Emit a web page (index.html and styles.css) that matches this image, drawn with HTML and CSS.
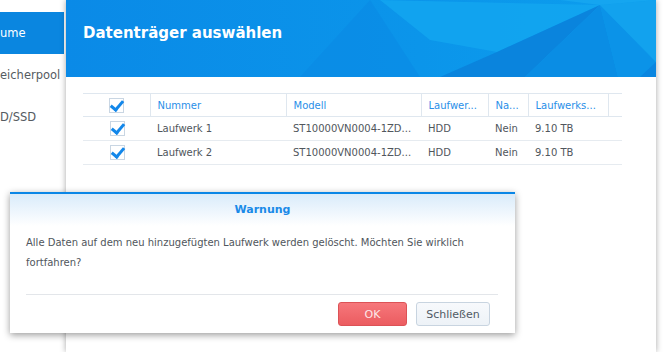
FILE: index.html
```html
<!DOCTYPE html>
<html>
<head>
  <title>Datenträger auswählen</title>
  <link rel="stylesheet" href="styles.css">
</head>
<body>
  <div class="app">
    <div class="sidebar">
      <div class="nav-item active">ume</div>
      <div class="nav-item">eicherpool</div>
      <div class="nav-item">D/SSD</div>
    </div>

    <div class="panel">
      <div class="header">
        <svg class="header-art" width="590" height="77" viewBox="66 0 590 77" preserveAspectRatio="none">
          <defs>
            <linearGradient id="hg" x1="0" y1="0" x2="1" y2="0">
              <stop offset="0" stop-color="#0a8ae7"/>
              <stop offset="0.6" stop-color="#0b95ea"/>
              <stop offset="1" stop-color="#0c9eee"/>
            </linearGradient>
          </defs>
          <rect x="66" y="0" width="590" height="77" fill="url(#hg)"/>
          <polygon points="370,0 420,77 300,77" fill="#0a88e4" opacity="0.5"/>
          <polygon points="380,0 600,5 497,52 430,40" fill="#13a6f0" opacity="0.8"/>
          <polygon points="497,52 600,5 525,77 440,77" fill="#0a84dd"/>
          <polygon points="600,5 525,77 618,77" fill="#0a8de4"/>
          <polygon points="600,5 656,62 656,77 618,77" fill="#0b93e8"/>
          <polygon points="600,5 656,0 656,62" fill="#12a2ee"/>
          <polygon points="560,0 656,0 600,5" fill="#1aaaf1" opacity="0.7"/>
          <polygon points="640,77 656,62 656,77" fill="#0a86e0"/>
        </svg>
        <h1 class="title">Datenträger auswählen</h1>
      </div>

      <div class="table-wrap">
        <table class="grid">
          <colgroup>
            <col style="width:67px">
            <col style="width:136px">
            <col style="width:135px">
            <col style="width:67px">
            <col style="width:40px">
            <col style="width:80px">
            <col style="width:14px">
          </colgroup>
          <thead>
            <tr>
              <th class="check-col"><span class="check hd"></span></th>
              <th>Nummer</th>
              <th>Modell</th>
              <th>Laufwer...</th>
              <th>Na...</th>
              <th>Laufwerks...</th>
              <th class="last"></th>
            </tr>
          </thead>
          <tbody>
            <tr>
              <td class="check-col"><span class="check"></span></td>
              <td>Laufwerk 1</td>
              <td>ST10000VN0004-1ZD...</td>
              <td>HDD</td>
              <td>Nein</td>
              <td>9.10 TB</td>
              <td></td>
            </tr>
            <tr>
              <td class="check-col"><span class="check"></span></td>
              <td>Laufwerk 2</td>
              <td>ST10000VN0004-1ZD...</td>
              <td>HDD</td>
              <td>Nein</td>
              <td>9.10 TB</td>
              <td></td>
            </tr>
          </tbody>
        </table>
      </div>
    </div>
  </div>

  <div class="dialog">
    <div class="dialog-title">Warnung</div>
    <div class="dialog-body">
      Alle Daten auf dem neu hinzugefügten Laufwerk werden gelöscht. Möchten Sie wirklich fortfahren?
    </div>
    <div class="dialog-footer">
      <button class="btn btn-ok">OK</button>
      <button class="btn btn-close">Schließen</button>
    </div>
  </div>
</body>
</html>
```

FILE: styles.css
```css
body {
  margin: 0;
  width: 672px;
  height: 352px;
  overflow: hidden;
  position: relative;
  background: #fff;
  font-family: "DejaVu Sans", Verdana, sans-serif;
}

.app {
  display: flex;
  height: 352px;
}

/* left navigation, mostly cut off */
.sidebar {
  width: 64px;
  padding-top: 12px;
  background: #fff;
  flex-shrink: 0;
}
.nav-item {
  height: 42px;
  line-height: 42px;
  font-size: 11.5px;
  color: #555b61;
  white-space: nowrap;
  overflow: hidden;
}
.nav-item.active {
  background: #0a86e0;
  color: #fff;
}

.panel {
  width: 590px;
  margin-left: 2px;
  background: #fff;
  box-shadow: 0 0 6px rgba(0, 0, 0, .35);
  position: relative;
  z-index: 1;
  flex-shrink: 0;
}

.header {
  height: 77px;
  position: relative;
  overflow: hidden;
}
.header-art {
  position: absolute;
  left: 0;
  top: 0;
}
.title {
  position: relative;
  margin: 0;
  padding: 23px 17px 0;
  font-size: 15px;
  font-weight: bold;
  color: #fff;
  line-height: 20px;
}

.table-wrap {
  padding: 16px 17px 0;
}
.grid {
  width: 539px;
  border-collapse: collapse;
  table-layout: fixed;
  font-size: 10px;
}
.grid th {
  height: 22px;
  padding: 0 7px;
  text-align: left;
  font-weight: normal;
  color: #2a8fe8;
  border-top: 1px solid #dfe7ef;
  border-bottom: 1px solid #dfe7ef;
  border-right: 1px solid #dfe7ef;
  white-space: nowrap;
  overflow: hidden;
}
.grid th.last {
  border-right: none;
}
.grid td {
  height: 23px;
  padding: 0 7px;
  color: #50565c;
  border-bottom: 1px solid #e6ebf0;
  white-space: nowrap;
  overflow: hidden;
}
.grid .check-col {
  text-align: center;
  padding: 0;
}

.check {
  display: inline-block;
  width: 13px;
  height: 13px;
  border: 1px solid #c9d6e3;
  background: #fff;
  position: relative;
  vertical-align: middle;
  margin-left: 2px;
}
.check.hd {
  margin-left: 0;
}
.check::after {
  content: "";
  position: absolute;
  left: 3px;
  top: -1px;
  width: 5px;
  height: 10px;
  border-right: 3px solid #1287ea;
  border-bottom: 3px solid #1287ea;
  transform: rotate(40deg);
  transform-origin: center;
}

/* warning dialog over the page */
.dialog {
  position: absolute;
  left: 10px;
  top: 192px;
  width: 505px;
  height: 141px;
  background: #fff;
  border-top: 2px solid #0a86e6;
  box-shadow: 0 2px 7px rgba(0, 0, 0, .4);
  z-index: 5;
  box-sizing: border-box;
}
.dialog-title {
  height: 32px;
  line-height: 32px;
  text-align: center;
  font-size: 11px;
  font-weight: bold;
  color: #1a8ae8;
  background: linear-gradient(#d9ebfa, #fff);
}
.dialog-body {
  padding: 7px 16px 0;
  height: 61px;
  font-size: 10px;
  line-height: 20px;
  color: #50565c;
}
.dialog-footer {
  margin: 0 17px 0 16px;
  border-top: 1px solid #e3e6ea;
  padding: 7px 8px 0 0;
  display: flex;
  justify-content: flex-end;
  gap: 9px;
}
.btn {
  height: 24px;
  border-radius: 3px;
  font-family: "DejaVu Sans", Verdana, sans-serif;
  font-size: 11px;
  padding: 0;
}
.btn-ok {
  width: 69px;
  background: linear-gradient(#f6777b, #eb5c60);
  border: 1px solid #dc5256;
  color: #fde8e8;
}
.btn-close {
  width: 74px;
  background: linear-gradient(#f7f9fc, #edf2f7);
  border: 1px solid #c8d4e0;
  color: #505a64;
}
```
